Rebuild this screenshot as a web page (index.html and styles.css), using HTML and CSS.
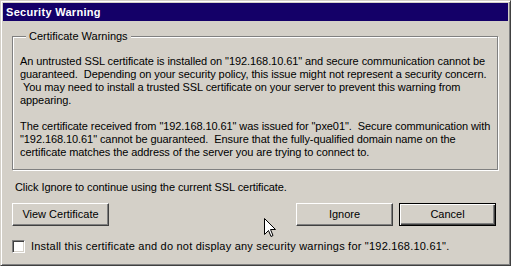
FILE: index.html
```html
<!DOCTYPE html>
<html>
<head>
<meta charset="utf-8">
<link rel="stylesheet" href="styles.css">
</head>
<body>
<div class="window">
  <div class="titlebar">Security Warning</div>
  <div class="content">
    <fieldset class="group">
      <legend>Certificate Warnings</legend>
      <p>An untrusted SSL certificate is installed on "192.168.10.61" and secure communication cannot be<br>guaranteed.&nbsp; Depending on your security policy, this issue might not represent a security concern.<br>&nbsp;You may need to install a trusted SSL certificate on your server to prevent this warning from<br>appearing.</p>
      <p>The certificate received from "192.168.10.61" was issued for "pxe01".&nbsp; Secure communication with<br>"192.168.10.61" cannot be guaranteed.&nbsp; Ensure that the fully-qualified domain name on the<br>certificate matches the address of the server you are trying to connect to.</p>
    </fieldset>
    <p class="hint">Click Ignore to continue using the current SSL certificate.</p>
    <div class="buttons">
      <button class="btn">View Certificate</button>
      <span class="spacer"></span>
      <button class="btn">Ignore</button>
      <button class="btn default">Cancel</button>
    </div>
    <label class="check"><span class="box"></span><span class="check-text">Install this certificate and do not display any security warnings for "192.168.10.61".</span></label>
  </div>
  <svg class="cursor" width="13" height="21" viewBox="0 0 13 21"><path d="M0.5 0.5 L0.5 16.5 L4.5 12.5 L7 18.5 L9 17.5 L6.5 11.5 L11.5 11.5 Z" fill="#fff" stroke="#000" stroke-width="1" stroke-linejoin="miter"/></svg>
</div>
</body>
</html>
```
FILE: styles.css
```css
html, body {
  margin: 0;
  padding: 0;
  background: #d4d0c8;
}
.window {
  position: relative;
  width: 511px;
  height: 266px;
  box-sizing: border-box;
  background: #d4d0c8;
  border: 1px solid;
  border-color: #d4d0c8 #404040 #404040 #d4d0c8;
  box-shadow: inset 1px 1px 0 #fff, inset -1px -1px 0 #808080;
  padding: 2px;
  font-family: "Liberation Sans", Arial, sans-serif;
  font-size: 11px;
  letter-spacing: -0.08px;
  line-height: 13px;
  color: #000;
}
.titlebar {
  height: 18px;
  background: #140068;
  color: #fff;
  font-weight: bold;
  font-size: 11px;
  letter-spacing: 0.3px;
  line-height: 18px;
  padding-left: 3px;
}
.content {
  padding: 8px 0 0 9px;
}
.group {
  margin: 0;
  width: 486px;
  box-sizing: border-box;
  border: 1px solid #808080;
  box-shadow: 1px 1px 0 #fff, inset 1px 1px 0 #fff;
  padding: 12px 4px 10px 7px;
}
.group legend {
  padding: 0 3px;
  margin-left: 6px;
  background: #d4d0c8;
  line-height: 14px;
  letter-spacing: 0;
}
.group p {
  margin: 0;
  white-space: nowrap;
}
.group p + p {
  margin-top: 13px;
}
.hint {
  margin: 11px 0 0 3px;
}
.buttons {
  display: flex;
  width: 484px;
  margin-top: 9px;
  gap: 6px;
}
.spacer {
  flex: 1;
}
.btn {
  width: 97px;
  height: 23px;
  box-sizing: border-box;
  background: #d4d0c8;
  font: inherit;
  letter-spacing: 0;
  color: #000;
  border: 1px solid;
  border-color: #fff #404040 #404040 #fff;
  box-shadow: inset -1px -1px 0 #808080, inset 1px 1px 0 #d4d0c8;
  padding: 0;
}
.btn.default {
  border: 1px solid #000;
  box-shadow: inset 1px 1px 0 #fff, inset -1px -1px 0 #404040, inset -2px -2px 0 #808080;
}
.check {
  display: flex;
  align-items: center;
  margin-top: 14px;
  gap: 6px;
}
.check-text {
  letter-spacing: 0.21px;
  white-space: nowrap;
}
.box {
  width: 13px;
  height: 13px;
  box-sizing: border-box;
  background: #fff;
  border: 1px solid;
  border-color: #808080 #fff #fff #808080;
  box-shadow: inset 1px 1px 0 #404040, inset -1px -1px 0 #d4d0c8;
}
.cursor {
  position: absolute;
  left: 263px;
  top: 217px;
}
```
